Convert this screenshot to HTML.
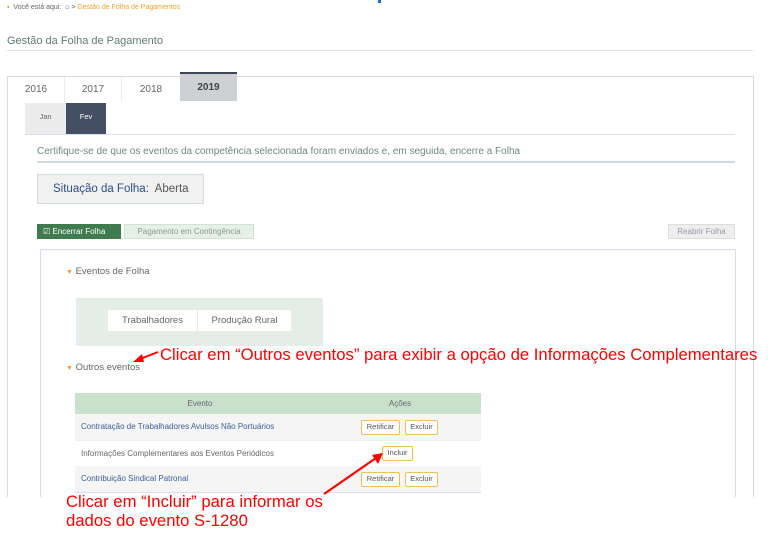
<!DOCTYPE html>
<html><head><meta charset="utf-8"><style>
*{margin:0;padding:0;box-sizing:border-box}
body{width:768px;height:540px;background:#fff;font-family:"Liberation Sans",sans-serif;position:relative;overflow:hidden}
.a{position:absolute}
.t{font-size:10px;color:#666;text-align:center;line-height:25px}
.red{color:#f00;font-size:16.7px;font-family:"Liberation Sans",sans-serif}
.btn{position:absolute;font-size:7.5px;color:#555;border:1.5px solid #f0c050;border-radius:2px;text-align:center;line-height:12px;height:15px;background:#fff}
.row{position:absolute;left:75px;width:406px;font-size:8px;line-height:26px;padding-left:6px}
</style></head><body>
<div class="a" style="left:7px;top:4px;font-size:7px;color:#666;line-height:8px"><span style="color:#9a3;">▪</span>&nbsp; Você está aqui: &nbsp;<span style="color:#456">⌂</span> &gt; <span style="color:#f0a030">Gestão de Folha de Pagamentos</span></div>
<div class="a" style="left:378px;top:0;width:3px;height:3px;background:#26c"></div>
<div class="a" style="left:7px;top:35px;font-size:11px;color:#5f7d70">Gestão da Folha de Pagamento</div>
<div class="a" style="left:7px;top:50px;width:746px;height:1px;background:#d8dde8"></div>
<div class="a" style="left:7px;top:76px;width:747px;height:421px;border:1.5px solid #d5dbe8;border-bottom:none"></div>
<div class="a t" style="left:8px;top:77px;width:57px;border-right:1px solid #eee">2016</div>
<div class="a t" style="left:65px;top:77px;width:57px;border-right:1px solid #eee">2017</div>
<div class="a t" style="left:122px;top:77px;width:58px">2018</div>
<div class="a t" style="left:180px;top:72px;width:57px;height:29px;background:#cdd1d4;border-top:2px solid #3c4658;font-weight:bold;color:#444;line-height:28px">2019</div>
<div class="a" style="left:25px;top:103px;width:41px;height:31px;background:#ececec;font-size:7.5px;color:#666;text-align:center;line-height:28px">Jan</div>
<div class="a" style="left:66px;top:103px;width:40px;height:31px;background:#454f63;font-size:7.5px;color:#fff;text-align:center;line-height:28px">Fev</div>
<div class="a" style="left:25px;top:134px;width:710px;height:1px;background:#dde"></div>
<div class="a" style="left:37px;top:146px;font-size:10px;color:#6d8a7e">Certifique-se de que os eventos da competência selecionada foram enviados e, em seguida, encerre a Folha</div>
<div class="a" style="left:37px;top:161px;width:698px;height:1.5px;background:#d0d8e4"></div>
<div class="a" style="left:37px;top:174px;width:167px;height:30px;background:#f1f1f1;border:1px solid #cfe0cf;font-size:11.5px;line-height:28px;padding-left:15px;color:#555"><span style="color:#2a4f8a">Situação da Folha:</span>&nbsp; Aberta</div>
<div class="a" style="left:37px;top:224px;width:84px;height:15px;background:#3f7b4e;color:#fff;font-size:8px;line-height:15px;padding-left:6px">☑ Encerrar Folha</div>
<div class="a" style="left:124px;top:224px;width:130px;height:15px;background:#e4f1e4;border:1px solid #cfe3cf;color:#8a9a90;font-size:8px;line-height:13px;text-align:center">Pagamento em Contingência</div>
<div class="a" style="left:668px;top:224px;width:67px;height:15px;background:#eee;border:1px solid #ddd;color:#99a;font-size:8px;line-height:13px;text-align:center">Reabrir Folha</div>
<div class="a" style="left:40px;top:249px;width:696px;height:248px;border:1.5px solid #d5dbe8;border-bottom:none"></div>
<div class="a" style="left:66px;top:266px;font-size:9.5px;color:#666"><span style="color:#f0a020;font-size:7px">▼</span> Eventos de Folha</div>
<div class="a" style="left:76px;top:298px;width:247px;height:48px;background:#e5eee6;border-radius:2px"></div>
<div class="a" style="left:108px;top:310px;width:89px;height:21px;background:#fff;font-size:9.5px;color:#666;text-align:center;line-height:21px">Trabalhadores</div>
<div class="a" style="left:198px;top:310px;width:93px;height:21px;background:#fff;font-size:9.5px;color:#666;text-align:center;line-height:21px">Produção Rural</div>
<div class="a" style="left:66px;top:362px;font-size:9.5px;color:#666"><span style="color:#f0a020;font-size:7px">▼</span> Outros eventos</div>
<div class="a" style="left:75px;top:393px;width:406px;height:21px;background:#c9e0ca;font-size:8px;color:#667;line-height:21px"><span class="a" style="left:0;width:250px;text-align:center">Evento</span><span class="a" style="left:300px;width:50px;text-align:center">Ações</span></div>
<div class="row" style="top:414px;background:#f5f5f5;color:#3a5f98">Contratação de Trabalhadores Avulsos Não Portuários</div>
<div class="row" style="top:440px;color:#666;border-top:1px solid #eee;border-bottom:1px solid #eee">Informações Complementares aos Eventos Periódicos</div>
<div class="row" style="top:466px;background:#f5f5f5;color:#3a5f98;border-bottom:1px solid #dde">Contribuição Sindical Patronal</div>
<div class="btn" style="left:361px;top:420px;width:39px">Retificar</div>
<div class="btn" style="left:405px;top:420px;width:33px">Excluir</div>
<div class="btn" style="left:382px;top:446px;width:31px">Incluir</div>
<div class="btn" style="left:361px;top:472px;width:39px">Retificar</div>
<div class="btn" style="left:405px;top:472px;width:33px">Excluir</div>
<div class="a red" style="left:160px;top:345px;white-space:nowrap">Clicar em “Outros eventos” para exibir a opção de Informações Complementares</div>
<div class="a red" style="left:66px;top:492px;line-height:19px">Clicar em “Incluir” para informar os<br>dados do evento S-1280</div>
<svg class="a" style="left:0;top:0" width="768" height="540">
<line x1="158" y1="352" x2="140" y2="359" stroke="#f00" stroke-width="2"/>
<polygon points="133,362 142,354 144,362" fill="#f00"/>
<line x1="324" y1="494" x2="376" y2="458" stroke="#f00" stroke-width="2.2"/>
<polygon points="383,453 372,455 378,464" fill="#f00"/>
</svg>
</body></html>
